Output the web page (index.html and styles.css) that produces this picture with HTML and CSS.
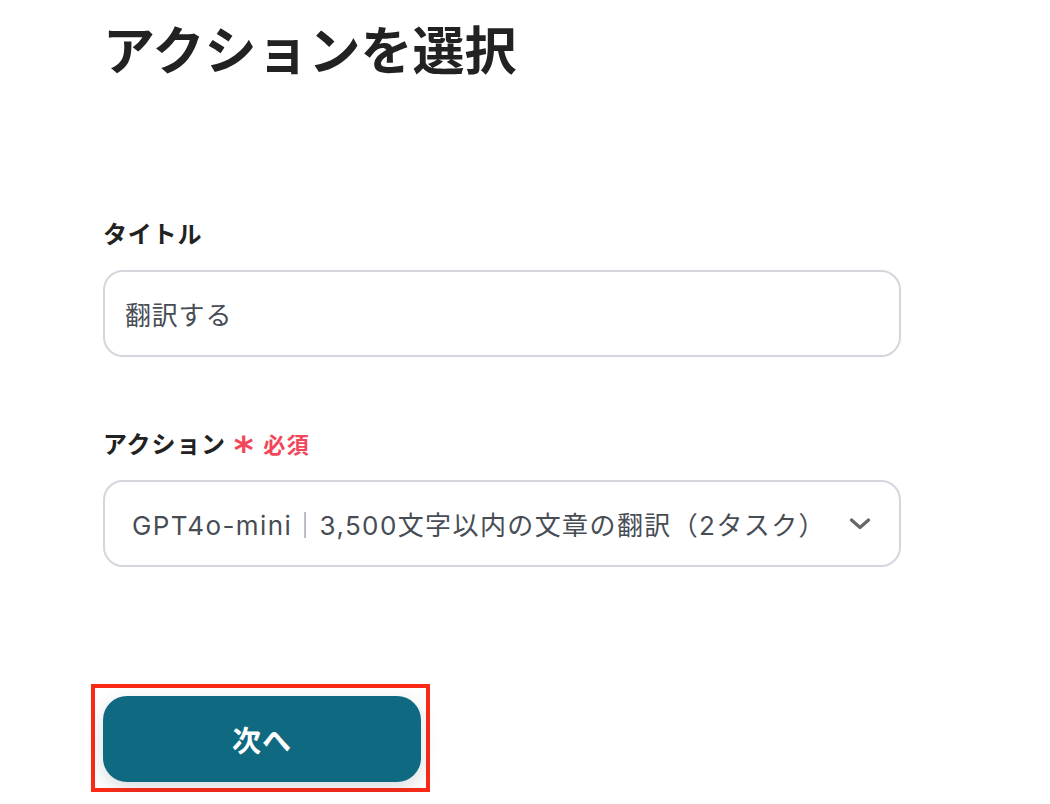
FILE: index.html
```html
<!DOCTYPE html>
<html lang="ja">
<head>
<meta charset="utf-8">
<title>アクションを選択</title>
<link rel="stylesheet" href="styles.css">
</head>
<body>
<main class="page">
  <h1 class="title">アクションを選択</h1>
  <section class="field field-title">
    <label class="label">タイトル</label>
    <div class="box"><span class="value">翻訳する</span></div>
  </section>
  <section class="field field-action">
    <label class="label">アクション<span class="req"><span class="ast">*</span>必須</span></label>
    <div class="box select">
      <span class="value">GPT4o-mini<span class="sep">｜</span>3,500文字以内の文章の翻訳（2タスク）</span>
      <svg class="chev" width="22" height="14" viewBox="0 0 22 14"><path d="M2.5 3 L11 10.5 L19.5 3" fill="none" stroke="#666" stroke-width="3.2" stroke-linecap="round" stroke-linejoin="round"/></svg>
    </div>
  </section>
  <div class="actions">
    <div class="highlight">
      <button class="next">次へ</button>
    </div>
  </div>
</main>
</body>
</html>
```

FILE: styles.css
```css
html, body {
  margin: 0;
  padding: 0;
  background: #ffffff;
}
body {
  font-family: "Inter", "Noto Sans CJK JP", sans-serif;
  color: #222222;
}
.page {
  width: 798px;
  padding-left: 103px;
  padding-top: 10px;
}
.title {
  margin: 0;
  font-family: "Noto Sans CJK JP", sans-serif;
  font-size: 52px;
  line-height: 76px;
  font-weight: 700;
  color: #222;
}
.field {
  display: flex;
  flex-direction: column;
}
.field-title {
  margin-top: 131px;
}
.field-action {
  margin-top: 70px;
}
.label {
  font-family: "Noto Sans CJK JP", sans-serif;
  font-size: 24px;
  font-weight: 700;
  line-height: 32px;
  letter-spacing: 0.8px;
  color: #222;
  display: flex;
  align-items: center;
}
.req {
  color: #f2475a;
  font-size: 22px;
  font-weight: 700;
  margin-left: 8px;
  display: inline-flex;
  align-items: center;
  letter-spacing: 1.5px;
}
.ast {
  font-family: "DejaVu Sans", sans-serif;
  font-size: 38px;
  margin-right: 8px;
  position: relative;
  top: 7px;
}
.box {
  margin-top: 21px;
  border: 2px solid #d3d7dd;
  border-radius: 20px;
  display: flex;
  align-items: center;
  padding: 0 20px;
  box-sizing: border-box;
  height: 87px;
}
.value {
  font-size: 26px;
  letter-spacing: 0.8px;
  color: #474d55;
  white-space: nowrap;
}
.select .value {
  letter-spacing: 1.4px;
}
.sep {
  font-family: "Noto Sans CJK JP", sans-serif;
  color: #8a9099;
}
.select {
  padding-left: 27px;
  padding-right: 28px;
  justify-content: space-between;
}
.chev {
  flex: none;
}
.actions {
  margin-top: 117px;
  margin-left: -12px;
}
.highlight {
  display: inline-block;
  border: 4px solid #fa2a17;
  padding: 8px 5px 6px 8px;
  width: 339px;
  box-sizing: border-box;
}
.next {
  display: block;
  width: 318px;
  height: 86px;
  border: none;
  border-radius: 24px;
  background: #0f6a81;
  color: #ffffff;
  font-family: "Noto Sans CJK JP", sans-serif;
  font-size: 29px;
  font-weight: 700;
  letter-spacing: 1px;
  box-shadow: 0 6px 18px rgba(40, 60, 80, 0.18);
}
```
